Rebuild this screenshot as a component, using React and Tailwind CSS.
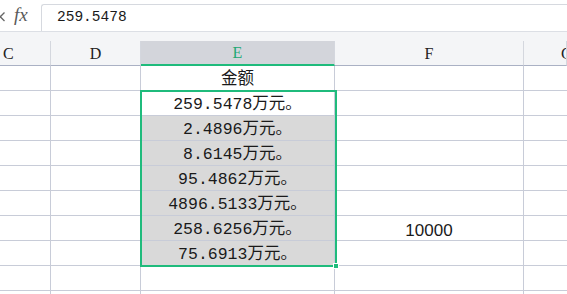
import React from 'react';

const GREEN = '#1fbb7c';

const cols = ['C', 'D', 'E', 'F', 'G'];

// rows below the header: [E value, F value, shaded]
const rows = [
  ['金额', '', false],
  ['259.5478万元。', '', false],
  ['2.4896万元。', '', true],
  ['8.6145万元。', '', true],
  ['95.4862万元。', '', true],
  ['4896.5133万元。', '', true],
  ['258.6256万元。', '10000', true],
  ['75.6913万元。', '', true],
  ['', '', false],
  ['', '', false],
];

const gridCols = 'grid grid-cols-[51px_90px_194px_189px_1fr]';

const FormulaBar = () => (
  <div className="flex h-[32px] items-stretch border-b border-[#dcdfe5] bg-white">
    <svg width="9" height="31" className="shrink-0">
      <path d="M-4 12.5 L4.5 21 M-4 21 L4.5 12.5" stroke="#666" strokeWidth="1.3" fill="none" />
    </svg>
    <div className="ml-[5px] flex w-[22px] items-center font-['Liberation_Serif',serif] text-[19px] italic text-[#5a5a5a]">
      fx
    </div>
    <div className="ml-[5px] mt-[4px] flex flex-1 items-center rounded-tl-[3px] border border-b-0 border-r-0 border-[#d6d9df] pl-[15px] font-['Liberation_Mono','Noto_Sans_CJK_SC',monospace] text-[14.5px] text-[#1a1a1a]">
      259.5478
    </div>
  </div>
);

const HeaderRow = () => (
  <div className="bg-[#f4f5f7] pt-[9px]">
    <div className={`${gridCols} h-[25px]`}>
      {cols.map((c, i) => {
        const active = c === 'E';
        return (
          <div
            key={c}
            className={`flex items-center overflow-hidden border-r border-[#d4d7de] pt-[1px] font-['Liberation_Serif',serif] text-[16px] ${
              active ? 'justify-center border-b-2 border-b-[#1fbb7c] bg-[#d3d5db] text-[#20a873]' : 'border-b border-b-[#aab1c4] text-[#222]'
            } ${i === 0 ? 'justify-start pl-[3px]' : ''} ${i === 4 ? 'justify-start pl-[37px]' : ''} ${i > 0 && i < 4 ? 'justify-center' : ''}`}
          >
            {c}
          </div>
        );
      })}
    </div>
  </div>
);

const BodyRow = ({ e, f, shaded }) => (
  <div className={`${gridCols} h-[25px]`}>
    <div className="border-b border-r border-[#c8ccd8]" />
    <div className="border-b border-r border-[#c8ccd8]" />
    <div
      className={`flex items-center justify-center border-b border-r border-[#c8ccd8] pt-[4px] font-['Liberation_Mono','Noto_Sans_CJK_SC',monospace] text-[16.5px] leading-none text-[#1a1a1a] ${
        shaded ? 'bg-[#d9d9d9]' : 'bg-white'
      }`}
    >
      <span className="whitespace-nowrap">{e}</span>
    </div>
    <div className="flex items-center justify-center border-b border-r border-[#c8ccd8] pt-[4px] font-['Liberation_Sans',sans-serif] text-[17px] leading-none text-[#1a1a1a]">
      {f}
    </div>
    <div className="border-b border-[#c8ccd8]" />
  </div>
);

export default function App() {
  return (
    <div className="h-[294px] w-[567px] overflow-hidden bg-white">
      <FormulaBar />
      <HeaderRow />
      <div className="relative">
        {rows.map(([e, f, shaded], i) => (
          <BodyRow key={i} e={e} f={f} shaded={shaded} />
        ))}
        {/* selection frame over E2:E8 */}
        <div
          className="pointer-events-none absolute left-[140px] top-[24px] h-[177px] w-[197px] border-[2px]"
          style={{ borderColor: GREEN }}
        >
          <div className="absolute -bottom-[4px] -right-[4px] h-[6px] w-[6px] border border-white" style={{ background: GREEN }} />
        </div>
      </div>
    </div>
  );
}
